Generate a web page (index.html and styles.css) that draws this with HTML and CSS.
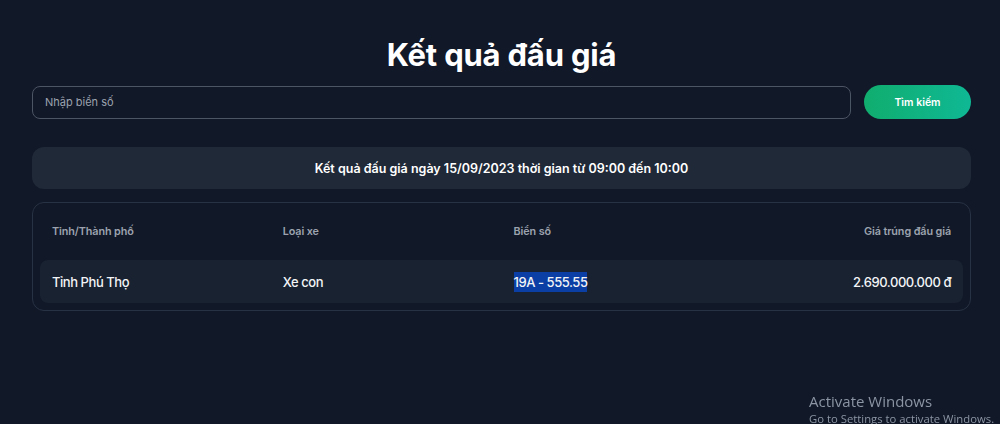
FILE: index.html
```html
<!DOCTYPE html>
<html lang="vi">
<head>
<meta charset="utf-8">
<title>Kết quả đấu giá</title>
<link rel="stylesheet" href="styles.css">
</head>
<body>
<main class="page">
  <h1 class="title">Kết quả đấu giá</h1>
  <form class="search">
    <input class="search-input" type="text" placeholder="Nhập biển số">
    <button class="search-btn" type="button">Tìm kiếm</button>
  </form>
  <div class="banner">Kết quả đấu giá ngày 15/09/2023 thời gian từ 09:00 đến 10:00</div>
  <div class="table">
    <div class="row head">
      <div class="cell">Tỉnh/Thành phố</div>
      <div class="cell">Loại xe</div>
      <div class="cell">Biển số</div>
      <div class="cell right">Giá trúng đấu giá</div>
    </div>
    <div class="row data">
      <div class="cell">Tỉnh Phú Thọ</div>
      <div class="cell">Xe con</div>
      <div class="cell"><span class="sel">19A - 555.55</span></div>
      <div class="cell right">2.690.000.000 đ</div>
    </div>
  </div>
</main>
<div class="watermark">
  <div class="wm-title">Activate Windows</div>
  <div class="wm-sub">Go to Settings to activate Windows.</div>
</div>
</body>
</html>
```
FILE: styles.css
```css
* { box-sizing: border-box; }
html, body { margin: 0; height: 100%; }
body {
  background: #111827;
  font-family: Inter, "Noto Sans", sans-serif;
  color: #fff;
  overflow: hidden;
}
.page {
  width: 939px;
  margin: 0 auto 0 32px;
  padding-top: 35px;
}
.title {
  margin: 0;
  text-align: center;
  font-size: 31px;
  font-weight: 700;
  line-height: 40px;
  letter-spacing: -0.2px;
}
.search {
  display: flex;
  gap: 13px;
  margin-top: 10px;
  align-items: center;
}
.search-input {
  flex: 1;
  height: 33px;
  background: #111827;
  border: 1px solid #4b5563;
  border-radius: 8px;
  padding: 0 12px;
  font-family: inherit;
  font-size: 11px;
  color: #fff;
  outline: none;
}
.search-input::placeholder { color: #9ca3af; }
.search-btn {
  width: 107px;
  height: 34px;
  border: 0;
  border-radius: 17px;
  background: linear-gradient(90deg, #10ad6e, #0fb894);
  color: #fff;
  font-family: inherit;
  font-size: 10.5px;
  font-weight: 600;
}
.banner {
  margin-top: 28px;
  height: 42px;
  background: #1f2937;
  border-radius: 12px;
  display: flex;
  align-items: center;
  justify-content: center;
  font-size: 12.5px;
  font-weight: 600;
}
.table {
  margin-top: 13px;
  border: 1px solid #273244;
  border-radius: 12px;
  padding: 0 7px 7px;
}
.row {
  display: grid;
  grid-template-columns: repeat(4, 1fr);
  align-items: center;
}
.cell { padding: 0 12px; }
.right { text-align: right; }
.head {
  height: 57px;
  font-size: 10.8px;
  font-weight: 600;
  letter-spacing: -0.1px;
  color: #9ca3af;
}
.data {
  height: 43px;
  background: #182231;
  border-radius: 8px;
  font-size: 13px;
  font-weight: 500;
  letter-spacing: -0.45px;
  color: #f3f4f6;
}
.sel {
  background: #0b3fa5;
  padding: 2px 0;
}
.watermark {
  position: fixed;
  left: 809px;
  top: 391px;
  color: #8b95a3;
  font-family: "Open Sans", "Noto Sans", sans-serif;
  white-space: nowrap;
}
.wm-title { font-size: 15px; line-height: 20px; }
.wm-sub { font-size: 11.3px; line-height: 16px; }
```
